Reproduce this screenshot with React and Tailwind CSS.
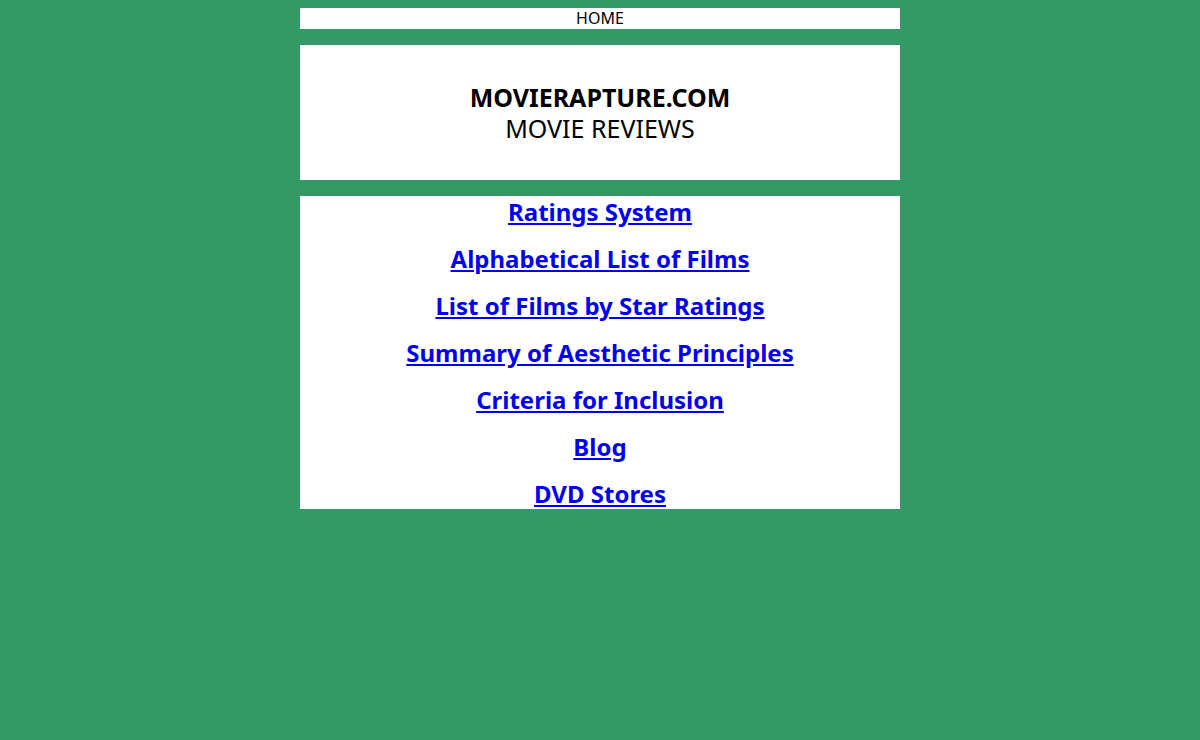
export default function App() {
    const links = [
        "Ratings System",
        "Alphabetical List of Films",
        "List of Films by Star Ratings",
        "Summary of Aesthetic Principles",
        "Criteria for Inclusion",
        "Blog",
        "DVD Stores",
    ];

    return (
        <div className="min-h-[740px] bg-[#339966] pt-2 font-['Noto_Sans',sans-serif] text-black">
            <div className="mx-auto w-[600px] flex flex-col gap-4">
                {/* top nav */}
                <div className="h-[21px] bg-white text-center text-[16px] leading-[21px]">HOME</div>

                {/* title */}
                <div className="h-[135px] bg-white flex flex-col items-center justify-center text-[25px] leading-[31px]">
                    <div className="font-bold">MOVIERAPTURE.COM</div>
                    <div>MOVIE REVIEWS</div>
                </div>

                {/* links */}
                <div className="h-[313px] overflow-hidden bg-white flex flex-col items-center gap-[15px]">
                    {links.map((l) => (
                        <a key={l} href="#" className="text-[24px] leading-[32px] font-bold text-[#0000ee] underline">
                            {l}
                        </a>
                    ))}
                </div>
            </div>
        </div>
    );
}
